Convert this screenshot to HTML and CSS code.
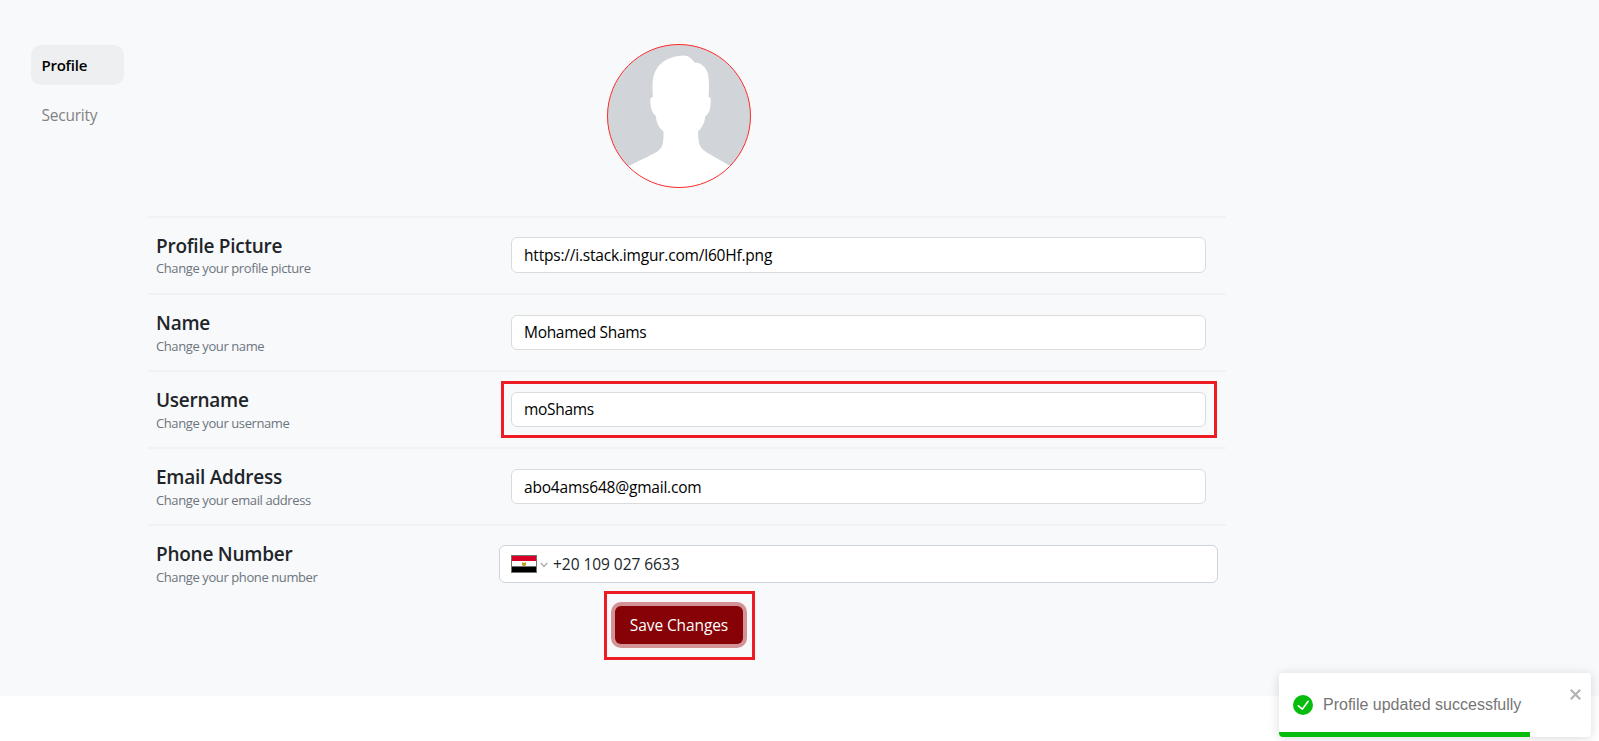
FILE: index.html
```html
<!DOCTYPE html>
<html lang="en">
<head>
<meta charset="utf-8">
<title>Profile settings</title>
<link rel="stylesheet" href="styles.css">
</head>
<body>
<main class="page">
  <nav class="tabs">
    <a class="tab tab-active">Profile</a>
    <a class="tab">Security</a>
  </nav>
  <form class="settings">
    <svg class="avatar" viewBox="0 0 144 144">
      <defs><clipPath id="round"><circle cx="72" cy="72" r="71.5"/></clipPath></defs>
      <g clip-path="url(#round)">
        <rect width="144" height="144" fill="#d1d4d9"/>
        <path fill="#fff" d="M46 53C45 43 45 33 49 26C54 17 64 12 76 11.500C82 11.500 85 15 87.500 18.500C94 18.500 99 23 101 30C102.500 38 102 46 101.500 53C104 53 104 55 103.500 60C103.500 65 102 70 98.500 72C97.500 79 95 84 91 87.500C91.500 95 91 102 97 106.500C103 111 114 116 123 122V144H20V123C31 117 43 112 51 107C57 103 56.500 95 56.500 87.500C52 84 49 78 49 72C46 70 44 66 43.500 60C43 55 43.500 53 46 53Z"/>
      </g>
      <circle cx="72" cy="72" r="71.500" fill="none" stroke="#ff2b2b"/>
    </svg>
    <section class="row row-first">
      <div class="label"><h5 class="title">Profile Picture</h5><p class="hint">Change your profile picture</p></div>
      <div class="field"><input class="input input-tall input-url" value="https://i.stack.imgur.com/l60Hf.png"></div>
    </section>
    <section class="row">
      <div class="label"><h5 class="title">Name</h5><p class="hint">Change your name</p></div>
      <div class="field"><input class="input" value="Mohamed Shams"></div>
    </section>
    <section class="row">
      <div class="label"><h5 class="title">Username</h5><p class="hint">Change your username</p></div>
      <div class="field field-marked"><input class="input" value="moShams"></div>
    </section>
    <section class="row">
      <div class="label"><h5 class="title">Email Address</h5><p class="hint">Change your email address</p></div>
      <div class="field"><input class="input input-email" value="abo4ams648@gmail.com"></div>
    </section>
    <section class="row row-phone">
      <div class="label"><h5 class="title">Phone Number</h5><p class="hint">Change your phone number</p></div>
      <div class="phone">
        <svg class="flag" viewBox="0 0 26 18"><path fill="#737373" d="M0 0h26v18H0z"/><path fill="#d80027" d="M1 1h24v5H1z"/><path fill="#fff" d="M1 6h24v5H1z"/><path fill="#000" d="M1 12h24v5H1z"/><path fill="#c6a01c" d="M11 7l2 1 2-1v3l-1 1h-2l-1-1z"/></svg>
        <svg class="chevron" viewBox="0 0 8 6"><path d="M.8 1L4 4.500 7.200 1" fill="none" stroke="#aaa" stroke-width="1.200"/></svg>
        <input class="phone-input" value="+20 109 027 6633">
      </div>
    </section>
    <div class="save-mark"><button type="button" class="save">Save Changes</button></div>
  </form>
</main>
<aside class="toast">
  <svg class="check" viewBox="0 0 24 24"><path fill="#07bc0c" d="M12 0a12 12 0 1012 12A12.014 12.014 0 0012 0zm6.927 8.200l-6.845 9.289a1.011 1.011 0 01-1.430.188l-4.888-3.908a1 1 0 111.250-1.562l4.076 3.261 6.227-8.451a1 1 0 111.610 1.183z"/></svg>
  <span class="toast-text">Profile updated successfully</span>
  <svg class="close" viewBox="0 0 10 10"><path d="M.7.700l8.600 8.600M9.300.700L.7 9.300" stroke="#b2b2b2" stroke-width="1.900"/></svg>
  <div class="progress"></div>
</aside>
</body>
</html>
```
FILE: styles.css
```css
* { box-sizing: border-box; }
body { margin: 0; background: #fff; font-family: "Open Sans", "Noto Sans", sans-serif; font-size: 15.5px; color: #212529; height: 741px; overflow: hidden; }
.page { display: flex; align-items: flex-start; height: 696px; background: #f8f9fb; padding: 44px 0 0 31px; }
.tabs { width: 93px; margin-right: 24px; padding-top: 1px; display: flex; flex-direction: column; gap: 10px; }
.tab { height: 40px; line-height: 41px; padding-left: 10.5px; border-radius: 10px; color: #828282; letter-spacing: -0.25px; }
.tab-active { background: #eeeff0; color: #000; font-weight: 600; font-size: 15px; }
.settings { width: 1078px; }
.avatar { display: block; width: 144px; height: 144px; margin: 0 0 28px 459px; }
.row { display: flex; height: 77px; border-top: 2px solid #f1f2f4; padding-left: 8px; }
.label { width: 345px; padding-top: 16px; }
.title { margin: 0; font-size: 19px; line-height: 24px; font-weight: 600; letter-spacing: -0.25px; }
.hint { margin: 0; font-size: 13px; line-height: 20px; color: #6c757d; letter-spacing: -0.4px; padding-top: 1px; }
.row-first .hint { padding-top: 0; }
.field { width: 716px; height: 57px; margin-top: 9px; padding: 11px 10px; }
.row-first .field { padding-top: 10px; }
.field-marked { border: 3px solid #ed1c24; padding: 8px 7px; }
.input { display: block; width: 695px; height: 35px; border: 1px solid #d9dbdd; border-radius: 6px; background: #fff; padding: 0 12px 1px; font: inherit; color: #000; letter-spacing: -0.3px; outline: 0; }
.input-tall { height: 36px; padding-bottom: 0; }
.input-url { letter-spacing: -0.2px; }
.input-email { letter-spacing: -0.2px; padding-bottom: 0; }
.row-phone { height: 65px; }
.phone { margin: 19px 0 0 -2px; width: 719px; height: 38px; border: 1px solid #ced4da; border-radius: 6px; background: #fff; display: flex; align-items: center; padding-left: 11px; }
.flag { width: 26px; height: 18px; }
.chevron { width: 8px; height: 6px; margin: 2px 5px 0 3px; }
.phone-input { border: 0; padding: 0; background: none; width: 400px; font: inherit; color: #212529; letter-spacing: -0.05px; }
.save-mark { margin: 2px 0 0 456px; width: 151px; height: 69px; border: 3px solid #ed1c24; padding: 12px 8px; }
.save { display: block; width: 128px; height: 38px; padding: 0; border: 0; border-radius: 6px; background: #860206; color: #fff; font: inherit; letter-spacing: -0.1px; box-shadow: 0 0 0 4px #d39295; }
.toast { position: absolute; left: 1279px; top: 673px; width: 312px; height: 64px; display: flex; align-items: center; padding-left: 14px; border-radius: 4px; background: #fff; overflow: hidden; box-shadow: 0 1px 10px rgba(0,0,0,.1), 0 2px 15px rgba(0,0,0,.05); font-family: "Liberation Sans", sans-serif; font-size: 16px; color: #757575; }
.check { width: 20px; height: 20px; margin-right: 10px; }
.toast-text { line-height: 20px; padding-bottom: 1px; }
.close { width: 11px; height: 11px; margin: -21px 10px 0 auto; }
.progress { position: absolute; left: 0; bottom: 0; width: 251px; height: 5px; background: #07bc0c; }
```
